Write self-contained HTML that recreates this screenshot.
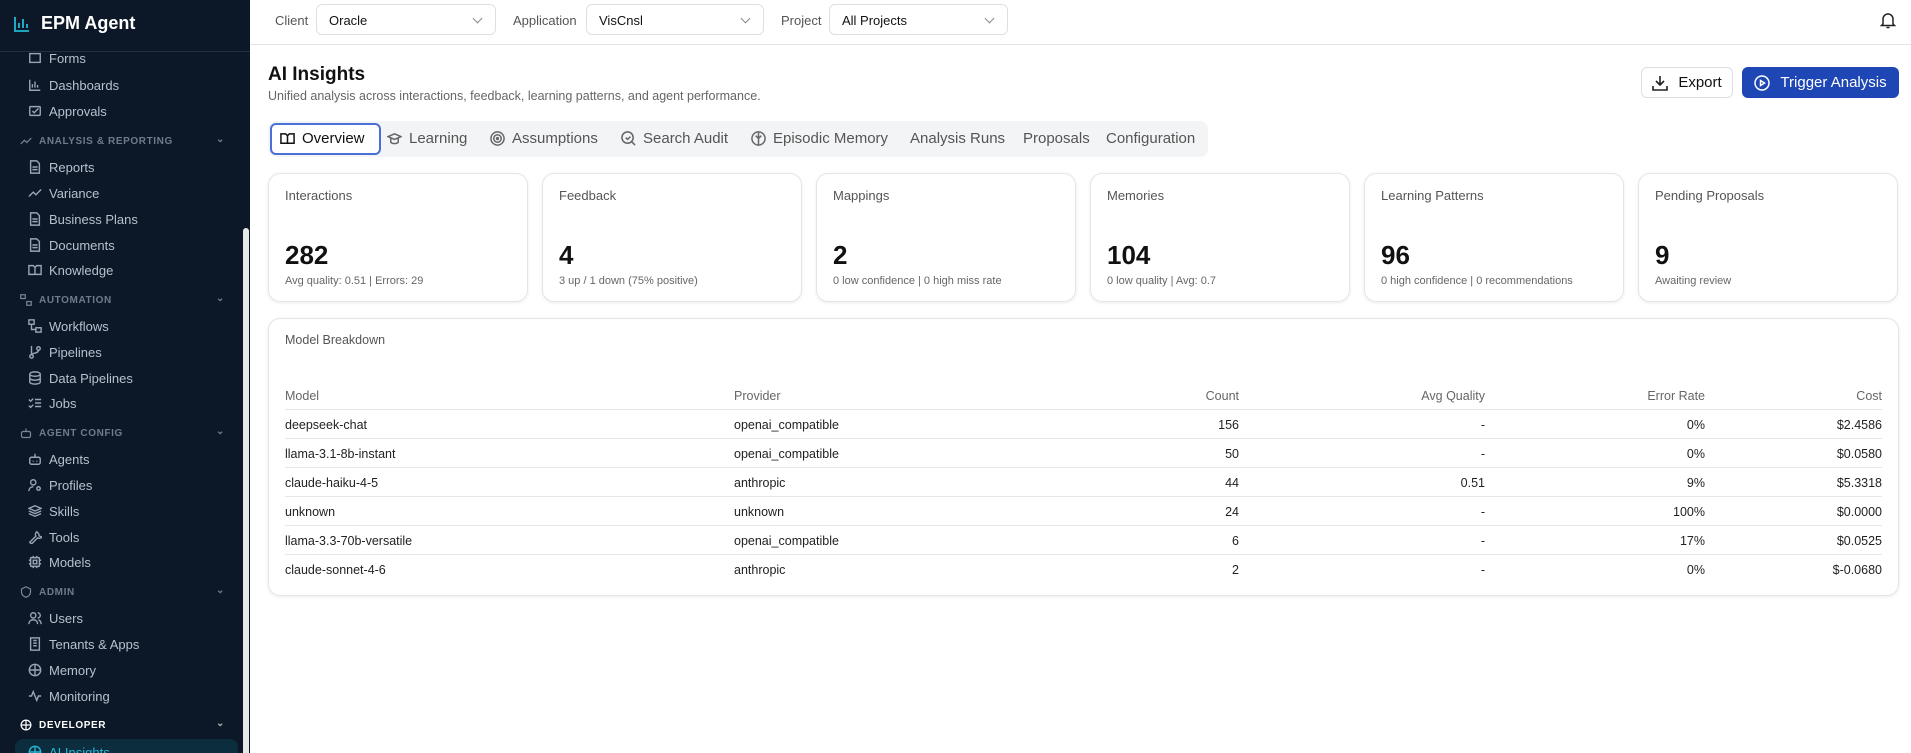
<!DOCTYPE html>
<html><head><meta charset="utf-8"><style>
*{box-sizing:border-box;margin:0;padding:0}
body{width:1911px;height:753px;overflow:hidden;font-family:"Liberation Sans",sans-serif;background:#fff;position:relative;color:#111}
.sb{position:absolute;left:0;top:0;width:250px;height:753px;background:#0c1828;overflow:hidden}
.logo{position:absolute;left:13px;top:13px;color:#fff;font-weight:bold;font-size:18px;display:flex;align-items:center;gap:10px}
.sbline{position:absolute;left:0;top:51px;width:250px;height:1px;background:#22303f}
.it{position:absolute;left:28px;color:#b8c0cc;font-size:13px;display:flex;align-items:center;height:18px;transform:translateY(-9px)}
.it svg{width:14px;height:14px;margin-right:7px;stroke:#9aa4b2;fill:none;stroke-width:1.6}
.sec{position:absolute;left:20px;width:205px;color:#6f7b8c;font-size:10px;font-weight:bold;letter-spacing:.6px;display:flex;align-items:center;height:14px;transform:translateY(-7px)}
.sec svg{width:12px;height:12px;margin-right:7px;stroke:#7b8696;fill:none;stroke-width:1.6}
.sec .ch{position:absolute;right:0;top:0;color:#6f7b8c;font-size:10px}
.scroll{position:absolute;left:243px;top:228px;width:6px;height:530px;background:#e8e8e8;border-radius:3px}
.top{position:absolute;left:250px;top:0;width:1661px;height:45px;border-bottom:1px solid #e3e5e8}
.lbl{position:absolute;top:13px;font-size:13px;color:#555}
.sel{position:absolute;top:4px;height:31px;border:1px solid #dcdfe3;border-radius:6px;font-size:13px;padding:8px 12px;color:#111}
.sel:after{content:"";position:absolute;right:14px;top:10px;width:6px;height:6px;border-right:1.3px solid #888;border-bottom:1.3px solid #888;transform:rotate(45deg)}
h1{position:absolute;left:268px;top:64px;font-size:19px;font-weight:bold}
.sub{position:absolute;left:268px;top:89px;font-size:12.5px;color:#666}
.btn{position:absolute;top:67px;height:31px;border-radius:6px;font-size:15px;display:flex;align-items:center;justify-content:center;gap:10px}
.tabs{position:absolute;left:268px;top:121px;width:940px;height:36px;background:#f3f4f6;border-radius:8px}
.tab{position:absolute;top:9px;font-size:15px;color:#555;display:flex;align-items:center;gap:7px}
.tab svg{width:15px;height:15px;stroke:#666;fill:none;stroke-width:1.6}
.card{position:absolute;top:173px;width:260px;height:129px;border:1px solid #e3e5e8;border-radius:12px;box-shadow:0 1px 3px rgba(0,0,0,.08)}
.card .l{position:absolute;left:16px;top:14px;font-size:13px;color:#555}
.card .n{position:absolute;left:16px;top:66px;font-size:26px;font-weight:bold;color:#111}
.card .s{position:absolute;left:16px;top:101px;font-size:11px;color:#666}
.tbl{position:absolute;left:268px;top:318px;width:1631px;height:278px;border:1px solid #e3e5e8;border-radius:12px;box-shadow:0 1px 3px rgba(0,0,0,.08)}
.row{position:absolute;left:16px;width:1597px;height:29px;border-top:1px solid #e5e7eb;font-size:12.5px;color:#222}
.row span{position:absolute;top:8px}
.hd{color:#666}
</style></head><body>
<div class="sb">
<div class="logo"><svg width="18" height="18" viewBox="0 0 18 18" fill="none" stroke="#22b8d6" stroke-width="1.8"><path d="M2 2v14h14M6 13V8M10 13V4M14 13V9"/></svg>EPM Agent</div>
<div class="sbline"></div>
<div class="it" style="top:58px"><svg viewBox="0 0 16 16"><rect x="2" y="3" width="12" height="10"/></svg>Forms</div>
<div class="it" style="top:85px"><svg viewBox="0 0 16 16"><path d="M2 2v12h12M5 11V7M8 11V4M11 11V8"/></svg>Dashboards</div>
<div class="it" style="top:111px"><svg viewBox="0 0 16 16"><rect x="2" y="3" width="12" height="10" rx="1"/><path d="M5 8l2 2 5-5"/></svg>Approvals</div>
<div class="sec" style="top:141px"><svg viewBox="0 0 16 16"><path d="M1 12l5-5 3 3 6-6"/></svg>ANALYSIS &amp; REPORTING<span class="ch">⌄</span></div>
<div class="it" style="top:167px"><svg viewBox="0 0 16 16"><path d="M3 1h7l3 3v11H3zM5 8h6M5 11h6"/></svg>Reports</div>
<div class="it" style="top:193px"><svg viewBox="0 0 16 16"><path d="M1 12l5-5 3 3 6-6"/></svg>Variance</div>
<div class="it" style="top:219px"><svg viewBox="0 0 16 16"><path d="M3 1h7l3 3v11H3zM5 8h6M5 11h6"/></svg>Business Plans</div>
<div class="it" style="top:245px"><svg viewBox="0 0 16 16"><path d="M3 1h7l3 3v11H3zM5 8h6M5 11h6"/></svg>Documents</div>
<div class="it" style="top:270px"><svg viewBox="0 0 16 16"><path d="M1 3h5l2 2 2-2h5v10H1zM8 5v8"/></svg>Knowledge</div>
<div class="sec" style="top:300px"><svg viewBox="0 0 16 16"><rect x="1" y="1" width="6" height="5"/><rect x="9" y="10" width="6" height="5"/></svg>AUTOMATION<span class="ch">⌄</span></div>
<div class="it" style="top:326px"><svg viewBox="0 0 16 16"><rect x="1" y="1" width="6" height="5"/><rect x="9" y="10" width="6" height="5"/><path d="M4 6v6h5"/></svg>Workflows</div>
<div class="it" style="top:352px"><svg viewBox="0 0 16 16"><circle cx="4" cy="13" r="2"/><circle cx="12" cy="4" r="2"/><path d="M4 1v10M12 6c0 4-8 3-8 5"/></svg>Pipelines</div>
<div class="it" style="top:378px"><svg viewBox="0 0 16 16"><ellipse cx="8" cy="3.5" rx="6" ry="2.5"/><path d="M2 3.5v9c0 1.4 2.7 2.5 6 2.5s6-1.1 6-2.5v-9M2 8c0 1.4 2.7 2.5 6 2.5s6-1.1 6-2.5"/></svg>Data Pipelines</div>
<div class="it" style="top:403px"><svg viewBox="0 0 16 16"><path d="M1 4l2 2 3-3M8 4h7M8 8h7M8 12h7M1 11l2 2 3-3"/></svg>Jobs</div>
<div class="sec" style="top:433px"><svg viewBox="0 0 16 16"><rect x="2" y="6" width="12" height="8" rx="2"/><path d="M8 2v4"/></svg>AGENT CONFIG<span class="ch">⌄</span></div>
<div class="it" style="top:459px"><svg viewBox="0 0 16 16"><rect x="2" y="6" width="12" height="8" rx="2"/><path d="M8 2v4M6 10v1M10 10v1"/></svg>Agents</div>
<div class="it" style="top:485px"><svg viewBox="0 0 16 16"><circle cx="6" cy="5" r="3"/><path d="M1 15c0-3 2-5 5-5"/><circle cx="12" cy="12" r="2"/></svg>Profiles</div>
<div class="it" style="top:511px"><svg viewBox="0 0 16 16"><path d="M8 2l7 3-7 3-7-3zM1 8l7 3 7-3M1 11l7 3 7-3"/></svg>Skills</div>
<div class="it" style="top:537px"><svg viewBox="0 0 16 16"><path d="M10 2a4 4 0 0 0-1 5l-7 7 2 2 7-7a4 4 0 0 0 5-1l-3-1-1-3z"/></svg>Tools</div>
<div class="it" style="top:562px"><svg viewBox="0 0 16 16"><rect x="3" y="3" width="10" height="10" rx="1"/><rect x="6" y="6" width="4" height="4"/><path d="M6 1v2M10 1v2M6 13v2M10 13v2M1 6h2M1 10h2M13 6h2M13 10h2"/></svg>Models</div>
<div class="sec" style="top:592px"><svg viewBox="0 0 16 16"><path d="M8 1l6 3v4c0 4-3 6-6 7-3-1-6-3-6-7V4z"/></svg>ADMIN<span class="ch">⌄</span></div>
<div class="it" style="top:618px"><svg viewBox="0 0 16 16"><circle cx="6" cy="5" r="3"/><path d="M1 15c0-3 2-5 5-5s5 2 5 5M11 2a3 3 0 0 1 0 6M15 15c0-2-1-4-3-5"/></svg>Users</div>
<div class="it" style="top:644px"><svg viewBox="0 0 16 16"><rect x="3" y="1" width="10" height="14"/><path d="M6 4h4M6 7h4M6 10h4"/></svg>Tenants &amp; Apps</div>
<div class="it" style="top:670px"><svg viewBox="0 0 16 16"><circle cx="8" cy="8" r="6.5"/><path d="M8 2v12M2 8h12"/></svg>Memory</div>
<div class="it" style="top:696px"><svg viewBox="0 0 16 16"><path d="M1 8h3l2-5 4 10 2-5h3"/></svg>Monitoring</div>
<div class="sec" style="top:725px;color:#fff"><svg viewBox="0 0 16 16" style="stroke:#fff"><circle cx="8" cy="8" r="6.5"/><path d="M8 2v12M2 8h12"/></svg>DEVELOPER<span class="ch" style="color:#aaa">⌄</span></div>
<div style="position:absolute;left:15px;top:739px;width:223px;height:30px;background:#0c2d3e;border-radius:8px"></div>
<div class="it" style="top:752px;color:#22b8d6"><svg viewBox="0 0 16 16" style="stroke:#22b8d6"><circle cx="8" cy="8" r="6.5"/><path d="M8 2v12M2 8h12"/></svg>AI Insights</div>
<div class="scroll"></div>
</div>

<div class="top">
<div class="lbl" style="left:25px">Client</div>
<div class="sel" style="left:66px;width:180px">Oracle</div>
<div class="lbl" style="left:263px">Application</div>
<div class="sel" style="left:336px;width:178px">VisCnsl</div>
<div class="lbl" style="left:531px">Project</div>
<div class="sel" style="left:579px;width:179px">All Projects</div>
<svg style="position:absolute;left:1630px;top:11px" width="16" height="18" viewBox="0 0 16 18" fill="none" stroke="#222" stroke-width="1.5"><path d="M3 13V8a5 5 0 0 1 10 0v5l1.5 1.5h-13zM6.5 16.5h3"/></svg>
</div>

<h1>AI Insights</h1>
<div class="sub">Unified analysis across interactions, feedback, learning patterns, and agent performance.</div>
<div class="btn" style="left:1641px;width:92px;border:1px solid #dcdfe3;color:#111"><svg width="16" height="16" viewBox="0 0 16 16" fill="none" stroke="#222" stroke-width="1.6"><path d="M8 1v9M4 6l4 4 4-4M1 11v4h14v-4"/></svg>Export</div>
<div class="btn" style="left:1742px;width:157px;background:#1e46b4;color:#fff"><svg width="16" height="16" viewBox="0 0 16 16" fill="none" stroke="#fff" stroke-width="1.5"><circle cx="8" cy="8" r="7"/><path d="M6.5 5.5v5l4-2.5z"/></svg>Trigger Analysis</div>

<div class="tabs">
<div style="position:absolute;left:2px;top:2px;width:111px;height:32px;background:#fff;border:2px solid #4a6fd8;border-radius:6px"></div>
<div class="tab" style="left:12px;color:#111"><svg viewBox="0 0 16 16" style="stroke:#111"><path d="M1 3h5l2 2 2-2h5v10H1zM8 5v8"/></svg>Overview</div>
<div class="tab" style="left:119px"><svg viewBox="0 0 16 16"><path d="M8 3l7 3-7 3-7-3zM4 8v4c2 2 6 2 8 0V8"/></svg>Learning</div>
<div class="tab" style="left:222px"><svg viewBox="0 0 16 16"><circle cx="8" cy="8" r="7"/><circle cx="8" cy="8" r="4"/><circle cx="8" cy="8" r="1"/></svg>Assumptions</div>
<div class="tab" style="left:353px"><svg viewBox="0 0 16 16"><circle cx="7" cy="7" r="6"/><path d="M11 11l4 4M5 7l2 2 3-3"/></svg>Search Audit</div>
<div class="tab" style="left:483px"><svg viewBox="0 0 16 16"><circle cx="8" cy="8" r="7"/><path d="M8 1v14M5 5l3 3 3-3"/></svg>Episodic Memory</div>
<div class="tab" style="left:642px">Analysis Runs</div>
<div class="tab" style="left:755px">Proposals</div>
<div class="tab" style="left:838px">Configuration</div>
</div>

<div class="card" style="left:268px"><div class="l">Interactions</div><div class="n">282</div><div class="s">Avg quality: 0.51 | Errors: 29</div></div>
<div class="card" style="left:542px"><div class="l">Feedback</div><div class="n">4</div><div class="s">3 up / 1 down (75% positive)</div></div>
<div class="card" style="left:816px"><div class="l">Mappings</div><div class="n">2</div><div class="s">0 low confidence | 0 high miss rate</div></div>
<div class="card" style="left:1090px"><div class="l">Memories</div><div class="n">104</div><div class="s">0 low quality | Avg: 0.7</div></div>
<div class="card" style="left:1364px"><div class="l">Learning Patterns</div><div class="n">96</div><div class="s">0 high confidence | 0 recommendations</div></div>
<div class="card" style="left:1638px"><div class="l">Pending Proposals</div><div class="n">9</div><div class="s">Awaiting review</div></div>

<div class="tbl">
<div style="position:absolute;left:16px;top:14px;font-size:12.5px;color:#555">Model Breakdown</div>
<div class="row hd" style="top:62px;border-top:none"><span style="left:0">Model</span><span style="left:449px">Provider</span><span style="right:643px">Count</span><span style="right:397px">Avg Quality</span><span style="right:177px">Error Rate</span><span style="right:0">Cost</span></div>
<div class="row" style="top:90px"><span style="left:0">deepseek-chat</span><span style="left:449px">openai_compatible</span><span style="right:643px">156</span><span style="right:397px">-</span><span style="right:177px">0%</span><span style="right:0">$2.4586</span></div>
<div class="row" style="top:119px"><span style="left:0">llama-3.1-8b-instant</span><span style="left:449px">openai_compatible</span><span style="right:643px">50</span><span style="right:397px">-</span><span style="right:177px">0%</span><span style="right:0">$0.0580</span></div>
<div class="row" style="top:148px"><span style="left:0">claude-haiku-4-5</span><span style="left:449px">anthropic</span><span style="right:643px">44</span><span style="right:397px">0.51</span><span style="right:177px">9%</span><span style="right:0">$5.3318</span></div>
<div class="row" style="top:177px"><span style="left:0">unknown</span><span style="left:449px">unknown</span><span style="right:643px">24</span><span style="right:397px">-</span><span style="right:177px">100%</span><span style="right:0">$0.0000</span></div>
<div class="row" style="top:206px"><span style="left:0">llama-3.3-70b-versatile</span><span style="left:449px">openai_compatible</span><span style="right:643px">6</span><span style="right:397px">-</span><span style="right:177px">17%</span><span style="right:0">$0.0525</span></div>
<div class="row" style="top:235px"><span style="left:0">claude-sonnet-4-6</span><span style="left:449px">anthropic</span><span style="right:643px">2</span><span style="right:397px">-</span><span style="right:177px">0%</span><span style="right:0">$-0.0680</span></div>
</div>
</body></html>
